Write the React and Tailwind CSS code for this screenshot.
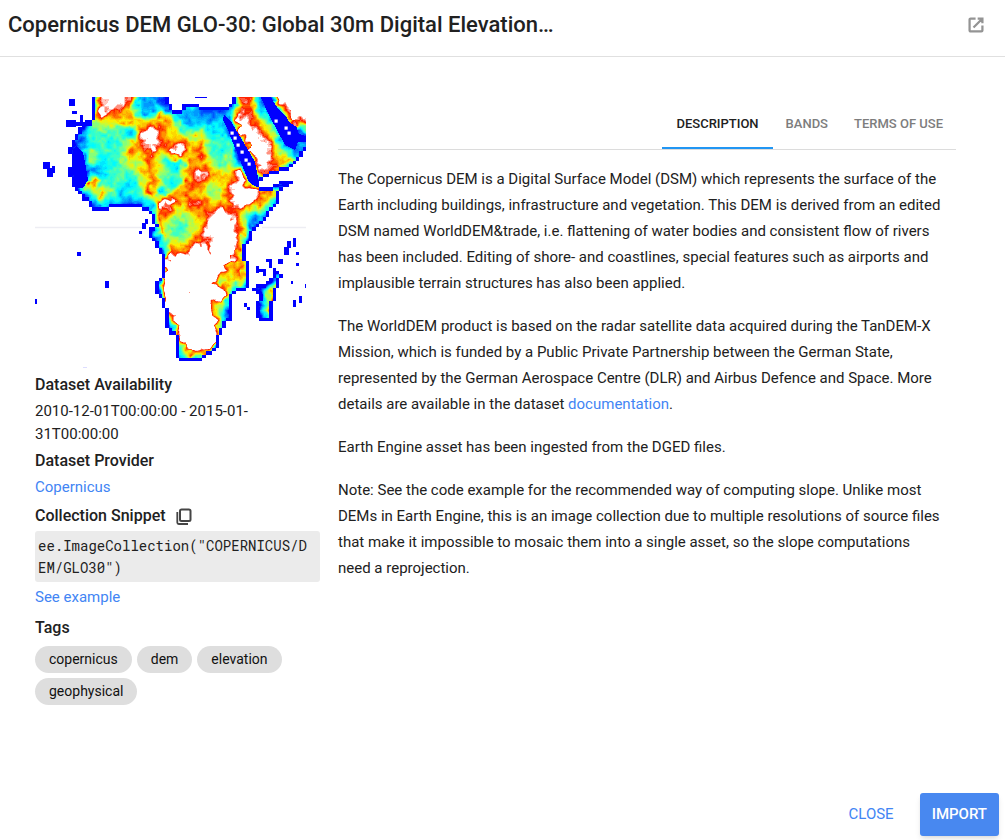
import React, { useMemo } from "react";

// Elevation samples every 10 units, 0 = sea level, 9 = above the colour scale.
const ELEVATION = [
  "000000899822101410008820999",
  "000005987622722211138841099",
  "000005666766773222319873098",
  "000004444289865453309986101",
  "000023434689878674440998312",
  "000015444868699684350998521",
  "000005334658533775450098761",
  "000001244467543897669088700",
  "000028344257535886689500000",
  "000004752448267765589987500",
  "000001432123996886679974100",
  "000000000001875678987442200",
  "000000000000754569997210000",
  "000000000000744579997100000",
  "000000000000265688996000000",
  "000000000000188898996200000",
  "000000000000099999967100000",
  "000000000000399999868200000",
  "000000000000299998565100600",
  "000000000000199899930005800",
  "000000000000099998710007900",
  "000000000000089998400007800",
  "000000000000039999500003200",
  "000000000000008999700000000",
  "000000000000007999200000000",
  "000000000000004886000000000",
  "000000000000002220000000000",
];

const LAND = [
  [[93, 96], [169, 96], [170, 104], [173, 109], [182, 109], [183, 103], [200, 103], [201, 108], [230, 108], [231, 101], [233, 96], [307, 96], [307, 148], [303, 154], [295, 165], [285, 171], [267, 176], [259, 181], [261, 187], [270, 186], [283, 181], [293, 181], [293, 185], [283, 188], [280, 192], [277, 206], [270, 213], [267, 219], [262, 223], [258, 228], [252, 234], [252, 240], [247, 243], [247, 262], [250, 265], [249, 288], [237, 292], [233, 296], [232, 322], [225, 323], [222, 333], [219, 339], [218, 347], [213, 351], [212, 355], [204, 357], [203, 360], [179, 360], [176, 354], [176, 335], [170, 333], [167, 327], [167, 309], [164, 307], [162, 298], [157, 295], [157, 281], [161, 278], [163, 270], [164, 263], [161, 262], [162, 257], [158, 249], [153, 239], [149, 235], [149, 227], [154, 226], [153, 215], [145, 211], [137, 206], [123, 206], [120, 208], [110, 209], [108, 212], [95, 212], [90, 207], [87, 202], [81, 200], [80, 191], [73, 188], [73, 178], [69, 177], [69, 169], [73, 168], [73, 155], [69, 153], [69, 148], [73, 143], [77, 135], [79, 128], [83, 123], [91, 120], [93, 112]],
  [[273, 267], [277, 267], [278, 273], [281, 275], [280, 287], [277, 288], [277, 298], [274, 300], [273, 310], [272, 313], [272, 322], [259, 322], [259, 318], [256, 317], [256, 303], [259, 301], [258, 293], [253, 292], [253, 288], [258, 284], [267, 283], [270, 280], [272, 274]],
];

const SEAS = [
  [[224, 115], [230, 120], [235, 128], [242, 140], [250, 153], [255, 162], [258, 177], [259, 187], [253, 185], [248, 180], [242, 165], [238, 155], [233, 143], [228, 130], [223, 120]],
  [[260, 96], [270, 96], [277, 107], [285, 115], [290, 123], [297, 127], [298, 133], [307, 137], [307, 142], [298, 142], [295, 150], [285, 145], [277, 130], [270, 117]],
  [[73, 150], [77, 146], [83, 152], [86, 168], [88, 180], [83, 188], [74, 187]],
];

const HOLES = [[232, 133], [235, 138], [238, 145], [242, 152], [246, 160], [249, 164], [276, 121], [286, 128], [289, 133]];

const ISLANDS = [
  [69, 99, 6, 7], [72, 111, 5, 3], [66, 120, 10, 7], [72, 122, 20, 4], [80, 115, 3, 7],
  [43, 162, 7, 7], [47, 168, 6, 9], [52, 166, 3, 7], [145, 219, 3, 5], [142, 223, 4, 6],
  [139, 231, 3, 3], [77, 252, 4, 4], [105, 281, 4, 7], [35, 299, 2, 5], [293, 238, 3, 9],
  [287, 241, 4, 7], [284, 247, 5, 8], [296, 252, 3, 3], [296, 263, 3, 3], [266, 259, 6, 3],
  [269, 259, 3, 9], [278, 259, 5, 5], [256, 266, 3, 7], [259, 269, 7, 3], [263, 272, 3, 4],
  [291, 281, 2, 3], [305, 284, 1, 4], [299, 296, 3, 7], [293, 300, 3, 7], [244, 303, 3, 4],
  [247, 307, 3, 3], [195, 97, 12, 1],
];

const RAMP = [
  [0, 0, 255], [0, 85, 255], [0, 175, 255], [0, 250, 255], [60, 255, 195],
  [160, 255, 95], [250, 240, 0], [255, 145, 0], [255, 35, 0], [255, 255, 255],
];

function inside(poly, x, y) {
  let hit = false;
  for (let i = 0, j = poly.length - 1; i < poly.length; j = i++) {
    const [xi, yi] = poly[i];
    const [xj, yj] = poly[j];
    if (yi > y !== yj > y && x < ((xj - xi) * (y - yi)) / (yj - yi) + xi) hit = !hit;
  }
  return hit;
}

function hash(x, y) {
  const s = Math.sin(x * 127.1 + y * 311.7) * 43758.5453;
  return s - Math.floor(s);
}

function bilinear(sample, x, y) {
  const ix = Math.floor(x);
  const iy = Math.floor(y);
  const fx = x - ix;
  const fy = y - iy;
  const top = sample(ix, iy) * (1 - fx) + sample(ix + 1, iy) * fx;
  const bottom = sample(ix, iy + 1) * (1 - fx) + sample(ix + 1, iy + 1) * fx;
  return top * (1 - fy) + bottom * fy;
}

const clamp = (v, lo, hi) => Math.min(hi, Math.max(lo, v));

function elevation(x, y) {
  const wx = x + (bilinear(hash, x / 5, y / 5) - 0.5) * 8;
  const wy = y + (bilinear(hash, x / 5 + 40, y / 5 + 9) - 0.5) * 8;
  const base = bilinear(
    (i, j) => {
      const v = Number(ELEVATION[clamp(j, 0, 26)][clamp(i, 0, 26)]);
      if (v !== 9) return v;
      return j > 14 ? 14 : 10;
    },
    (wx - 40) / 10,
    (wy - 102) / 10
  );
  return base + (bilinear(hash, x / 3, y / 3 + 70) - 0.5) * 1.3;
}

function colour(value) {
  const v = clamp(Math.round(value * 4) / 4, 0, 9);
  const i = Math.min(8, Math.floor(v));
  const f = v - i;
  const c = RAMP[i].map((a, k) => Math.round(a + (RAMP[i + 1][k] - a) * f));
  return `rgb(${c.join(",")})`;
}

function buildPaths() {
  const n = 81;
  const size = 271 / n;
  const land = (c, r) => {
    const x = 35 + (clamp(c, 0, n - 1) + 0.5) * size;
    const y = 97 + (clamp(r, 0, n - 1) + 0.5) * size;
    return LAND.some((p) => inside(p, x, y));
  };
  const mask = Array.from({ length: n }, (_, r) => Array.from({ length: n }, (_, c) => land(c, r)));
  const at = (c, r) => mask[clamp(r, 0, n - 1)][clamp(c, 0, n - 1)];
  const paths = {};
  for (let r = 0; r < n; r++) {
    for (let c = 0; c < n; c++) {
      if (!mask[r][c]) continue;
      const coast = !(at(c - 1, r) && at(c + 1, r) && at(c, r - 1) && at(c, r + 1));
      const left = Math.round(35 + c * size);
      const right = Math.round(35 + (c + 1) * size);
      const top = Math.round(97 + r * size);
      const bottom = Math.round(97 + (r + 1) * size);
      for (let y = top; y < bottom; y++) {
        for (let x = left; x < right; x++) {
          const sea = coast || SEAS.some((p) => inside(p, x + 0.5, y + 0.5));
          const fill = sea ? "rgb(0,0,255)" : colour(elevation(x, y));
          paths[fill] = (paths[fill] || "") + `M${x} ${y}h1v1h-1z`;
        }
      }
    }
  }
  return Object.entries(paths);
}

function ElevationMap() {
  const paths = useMemo(buildPaths, []);
  return (
    <svg viewBox="35 97 271 271" className="block w-[271px]" role="img" aria-label="Elevation of Africa">
      <defs>
        <filter id="soften" x="-5%" y="-5%" width="110%" height="110%">
          <feGaussianBlur stdDeviation="0.7" />
        </filter>
      </defs>
      <path d="M35 227.500H142M262 227.500H306" stroke="#ededf3" strokeWidth="1.500" />
      <g filter="url(#soften)">
        {paths.map(([fill, d]) => (
          <path key={fill} d={d} fill={fill} shapeRendering="crispEdges" />
        ))}
        {ISLANDS.map(([x, y, w, h]) => (
          <rect key={`${x}-${y}`} x={x} y={y} width={w} height={h} fill="#0000ff" />
        ))}
        {HOLES.map(([x, y]) => (
          <rect key={`${x}-${y}`} x={x - 1.5} y={y - 1.5} width="3.200" height="3.200" fill="#fff" />
        ))}
      </g>
      <path d="M83 367.500h4" stroke="#ddddff" />
    </svg>
  );
}

function OpenIcon() {
  return (
    <svg viewBox="0 0 24 24" className="size-5" fill="none" stroke="#949494" strokeWidth="2.700" aria-hidden="true">
      <path d="M11.500 4.300H5.500a1.200 1.200 0 0 0-1.200 1.200v13a1.200 1.200 0 0 0 1.200 1.200h13a1.200 1.200 0 0 0 1.200-1.200V12.500M14 4.300h5.700V10M19.200 4.800L9 15" />
    </svg>
  );
}

function CopyIcon() {
  return (
    <svg viewBox="0 0 16 17" className="h-[17px] w-4" fill="none" stroke="#454545" strokeWidth="2" aria-hidden="true">
      <rect x="4" y="1.500" width="10.500" height="11.500" rx="1.500" />
      <path d="M1.300 4v10.500a1.500 1.500 0 0 0 1.500 1.500H12" strokeWidth="1.800" />
    </svg>
  );
}

const TABS = ["DESCRIPTION", "BANDS", "TERMS OF USE"];
const TAGS = ["copernicus", "dem", "elevation", "geophysical"];

export default function App() {
  return (
    <div className="flex min-h-screen flex-col bg-white font-['Roboto',sans-serif] text-[15px] text-[#212121]">
      <header className="flex h-[57px] items-center justify-between border-b border-[#e0e0e0] pr-[19px] pb-[7px] pl-2">
        <h1 className="text-[22px] leading-7 font-medium">Copernicus DEM GLO-30: Global 30m Digital Elevation…</h1>
        <a href="#open" aria-label="Open in new tab">
          <OpenIcon />
        </a>
      </header>

      <main className="flex flex-1 items-start gap-[18px] pt-10 pr-[49px] pl-[35px]">
        <aside className="w-[285px] shrink-0">
          <ElevationMap />
          <h2 className="mt-[5px] text-base leading-6 font-medium">Dataset Availability</h2>
          <p className="mt-[3px] leading-[23px]">2010-12-01T00:00:00 - 2015-01-31T00:00:00</p>
          <h2 className="mt-[3px] text-base leading-6 font-medium">Dataset Provider</h2>
          <a href="#copernicus" className="mt-[2px] block leading-6 text-[#4285f4]">Copernicus</a>
          <div className="mt-[5px] flex items-center gap-[10px]">
            <h2 className="text-base leading-6 font-medium">Collection Snippet</h2>
            <button type="button" aria-label="Copy snippet">
              <CopyIcon />
            </button>
          </div>
          <code className="mt-[3px] block rounded-[3px] bg-[#ebebeb] pt-1 pr-2 pb-[3px] pl-[3px] font-['Roboto_Mono','Liberation_Mono',monospace] text-sm leading-[22px] break-all">
            ee.ImageCollection("COPERNICUS/DEM/GLO30")
          </code>
          <a href="#example" className="mt-[3px] block leading-6 text-[#4285f4]">See example</a>
          <h2 className="mt-[7px] text-base leading-6 font-medium">Tags</h2>
          <ul className="mt-[6px] flex flex-wrap gap-[5px] text-sm">
            {TAGS.map((tag) => (
              <li key={tag} className="rounded-full bg-[#dedede] px-[14px] leading-[27px] text-[#111]">{tag}</li>
            ))}
          </ul>
        </aside>

        <section className="min-w-0 flex-1">
          <div role="tablist" className="flex justify-end border-b border-[#dcdcdc] text-[13px] font-medium">
            {TABS.map((tab, i) => (
              <button
                key={tab}
                type="button"
                role="tab"
                aria-selected={i === 0}
                className={
                  i === 0
                    ? "h-[52px] border-b-2 border-[#2196f3] px-[14px] pt-1"
                    : "h-[52px] border-b-2 border-transparent px-[13px] pt-1 text-[#7d7d7d]"
                }
              >
                {tab}
              </button>
            ))}
          </div>
          <div className="mt-4 flex flex-col gap-[17px] leading-[26px]">
            <p>
              The Copernicus DEM is a Digital Surface Model (DSM) which represents the surface of the Earth including
              buildings, infrastructure and vegetation. This DEM is derived from an edited DSM named
              WorldDEM&amp;trade, i.e. flattening of water bodies and consistent flow of rivers has been included.
              Editing of shore- and coastlines, special features such as airports and implausible terrain structures
              has also been applied.
            </p>
            <p>
              The WorldDEM product is based on the radar satellite data acquired during the TanDEM-X Mission, which is
              funded by a Public Private Partnership between the German State, represented by the German Aerospace
              Centre (DLR) and Airbus Defence and Space. More details are available in the dataset{" "}
              <a href="#documentation" className="text-[#4285f4]">documentation</a>.
            </p>
            <p>Earth Engine asset has been ingested from the DGED files.</p>
            <p>
              Note: See the code example for the recommended way of computing slope. Unlike most DEMs in Earth Engine,
              this is an image collection due to multiple resolutions of source files that make it impossible to mosaic
              them into a single asset, so the slope computations need&nbsp;a reprojection.
            </p>
          </div>
        </section>
      </main>

      <footer className="flex items-center justify-end gap-[14px] pr-[6px] pb-1">
        <button type="button" className="h-[43px] px-3 text-[#4285f4]">CLOSE</button>
        <button type="button" className="h-[43px] rounded-[3px] bg-[#4888f0] px-3 font-medium text-white shadow-md">
          IMPORT
        </button>
      </footer>
    </div>
  );
}
